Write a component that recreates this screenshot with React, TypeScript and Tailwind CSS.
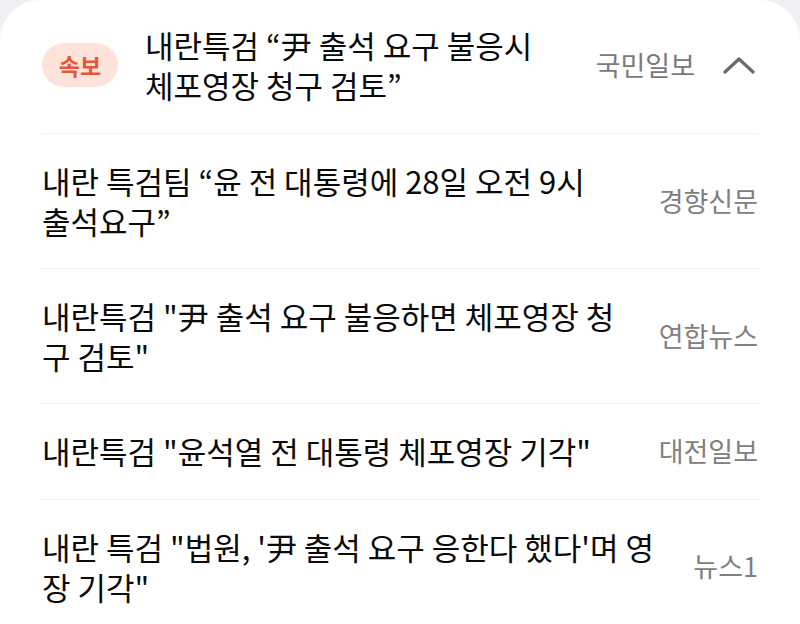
import React from "react";

const rows = [
  { title: "내란 특검팀 “윤 전 대통령에 28일 오전 9시 출석요구”", source: "경향신문", keep: true },
  { title: "내란특검 \"尹 출석 요구 불응하면 체포영장 청구 검토\"", source: "연합뉴스", keep: false },
  { title: "내란특검 \"윤석열 전 대통령 체포영장 기각\"", source: "대전일보", keep: false },
  { title: "내란 특검 \"법원, '尹 출석 요구 응한다 했다'며 영장 기각\"", source: "뉴스1", keep: false },
];

export default function App() {
  return (
    <div className="w-[800px] h-[624px] overflow-hidden bg-[#eef0f3] font-['Noto_Sans_CJK_KR','Noto_Sans',sans-serif]">
      <div className="h-full bg-white rounded-t-[40px] px-[42px]">
        <div className="flex items-center pt-[25px] pb-[28px] border-b border-[#f1f1f1]">
          <div className="w-[76px] h-[44px] shrink-0 rounded-full bg-[#fde3da] text-[#e4583a] text-[23px] font-bold flex items-center justify-center">
            속보
          </div>
          <div className="ml-[27px] flex-1 text-[31px] leading-[40px] text-[#0a0a0a] break-keep">
            내란특검 “尹 출석 요구 불응시 체포영장 청구 검토”
          </div>
          <div className="ml-[30px] text-[27px] text-[#7a7a7a] shrink-0">국민일보</div>
          <svg className="ml-[28px] mr-[3px] shrink-0" width="32" height="18" viewBox="0 0 32 18" fill="none">
            <path d="M2 16 L16 3 L30 16" stroke="#6b6b6b" strokeWidth="3.2" strokeLinecap="round" strokeLinejoin="round" />
          </svg>
        </div>
        {rows.map((r, i) => (
          <div
            key={i}
            className={`flex items-center py-[27px] ${i < rows.length - 1 ? "border-b border-[#f1f1f1]" : ""}`}
          >
            <div className={`flex-1 text-[31px] leading-[40px] text-[#0a0a0a] ${r.keep ? "break-keep" : ""}`}>{r.title}</div>
            <div className="ml-[32px] shrink-0 text-[27px] text-[#808080]">{r.source}</div>
          </div>
        ))}
      </div>
    </div>
  );
}
